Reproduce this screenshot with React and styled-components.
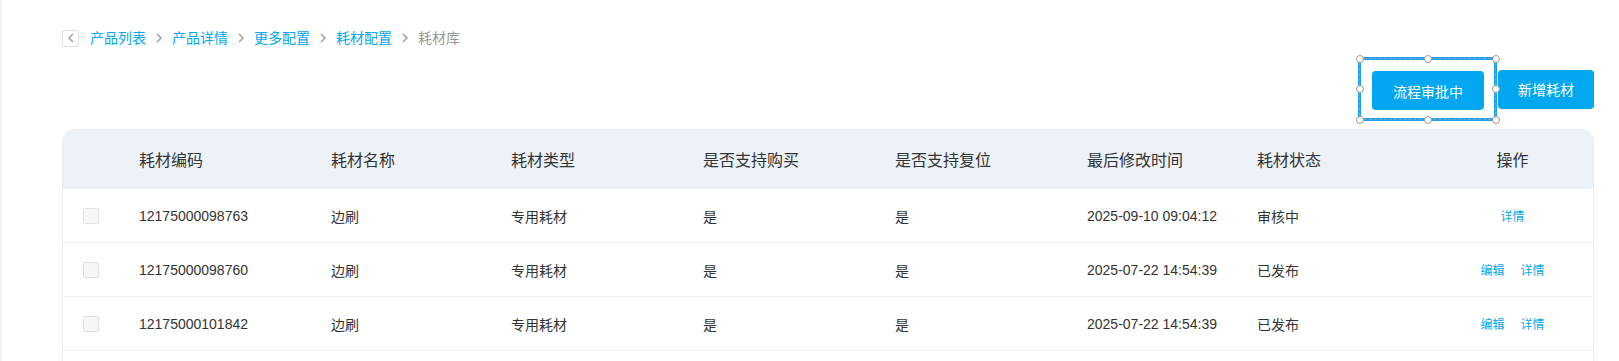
import React from "react";
import styled, { createGlobalStyle, css } from "styled-components";

const BLUE = "#02a7f0";

const GlobalStyle = createGlobalStyle`
  html, body {
    margin: 0;
    padding: 0;
    background: #fff;
    overflow: hidden;
  }
  body {
    font-family: "Liberation Sans", "Noto Sans CJK SC", sans-serif;
    color: #333;
  }
  * {
    box-sizing: border-box;
  }
`;

const rows = [
  { code: "12175000098763", name: "边刷", type: "专用耗材", buy: "是", reset: "是", time: "2025-09-10 09:04:12", status: "审核中", editable: false },
  { code: "12175000098760", name: "边刷", type: "专用耗材", buy: "是", reset: "是", time: "2025-07-22 14:54:39", status: "已发布", editable: true },
  { code: "12175000101842", name: "边刷", type: "专用耗材", buy: "是", reset: "是", time: "2025-07-22 14:54:39", status: "已发布", editable: true },
];

const crumbs = ["产品列表", "产品详情", "更多配置", "耗材配置"];

const handles = [
  [0, 0], [50, 0], [100, 0],
  [0, 50], [100, 50],
  [0, 100], [50, 100], [100, 100],
];

const ChevronRight = () => (
  <svg width="6" height="10" viewBox="0 0 6 10">
    <path d="M1 1l4 4-4 4" fill="none" stroke="#999" strokeWidth="1.4" />
  </svg>
);

const ChevronLeft = () => (
  <svg width="6" height="10" viewBox="0 0 6 10">
    <path d="M5 1L1 5l4 4" fill="none" stroke="#999" strokeWidth="1.4" />
  </svg>
);

const App = () => {
  return (
    <>
      <GlobalStyle />
      <Page>
        <Breadcrumb>
          <BackButton>
            <ChevronLeft />
          </BackButton>
          {crumbs.map((c) => (
            <React.Fragment key={c}>
              <Crumb>{c}</Crumb>
              <Sep>
                <ChevronRight />
              </Sep>
            </React.Fragment>
          ))}
          <Crumb $current>耗材库</Crumb>
        </Breadcrumb>

        <Toolbar>
          <Selection>
            <PrimaryButton>流程审批中</PrimaryButton>
            {handles.map(([x, y]) => (
              <Handle key={`${x}-${y}`} $x={x} $y={y} />
            ))}
          </Selection>
          <PrimaryButton $narrow>新增耗材</PrimaryButton>
        </Toolbar>

        <Table>
          <HeadRow>
            <Cell />
            <Cell>耗材编码</Cell>
            <Cell>耗材名称</Cell>
            <Cell>耗材类型</Cell>
            <Cell>是否支持购买</Cell>
            <Cell>是否支持复位</Cell>
            <Cell>最后修改时间</Cell>
            <Cell>耗材状态</Cell>
            <Cell $center>操作</Cell>
          </HeadRow>
          {rows.map((r) => (
            <Row key={r.code}>
              <Cell $check>
                <Checkbox />
              </Cell>
              <Cell>{r.code}</Cell>
              <Cell>{r.name}</Cell>
              <Cell>{r.type}</Cell>
              <Cell>{r.buy}</Cell>
              <Cell>{r.reset}</Cell>
              <Cell>{r.time}</Cell>
              <Cell>{r.status}</Cell>
              <Cell $center>
                <Actions>
                  {r.editable && <ActionLink>编辑</ActionLink>}
                  <ActionLink>详情</ActionLink>
                </Actions>
              </Cell>
            </Row>
          ))}
        </Table>
      </Page>
    </>
  );
};

export default App;

const Page = styled.div`
  height: 361px;
  overflow: hidden;
  border-left: 2px solid #eff1f4;
  padding: 29px 25px 0 60px;
`;

const Breadcrumb = styled.div`
  display: flex;
  align-items: center;
  height: 18px;
  font-size: 14px;
`;

const BackButton = styled.div`
  width: 17px;
  height: 17px;
  border: 1px solid #dcdfe6;
  border-radius: 2px;
  display: flex;
  justify-content: center;
  align-items: center;
  margin-right: 11px;
`;

const Crumb = styled.span`
  color: ${({ $current }) => ($current ? "#999" : BLUE)};
  line-height: 18px;
  white-space: nowrap;
`;

const Sep = styled.span`
  display: flex;
  align-items: center;
  margin: 0 10px;
`;

const Toolbar = styled.div`
  display: flex;
  justify-content: flex-end;
  align-items: center;
  margin-top: 10px;
`;

const Selection = styled.div`
  position: relative;
  border: 3px solid #1ba1ee;
  padding: 11px 10px 8px 11px;
  margin-right: 1px;

  &::before {
    content: "";
    position: absolute;
    inset: -2px;
    border: 1px dashed rgba(150, 165, 180, 0.85);
    pointer-events: none;
  }
`;

const Handle = styled.span`
  position: absolute;
  width: 8px;
  height: 8px;
  border-radius: 50%;
  background: #fff;
  border: 1.5px solid #9a9a9a;
  transform: translate(-50%, -50%);
  ${({ $x, $y }) => css`
    left: calc(${$x}% + ${($x - 50) * 0.03}px);
    top: calc(${$y}% + ${($y - 50) * 0.03}px);
  `}
`;

const PrimaryButton = styled.button`
  display: block;
  height: 39px;
  padding: 0 ${({ $narrow }) => ($narrow ? "20px" : "21px")};
  border: none;
  border-radius: 4px;
  background: ${BLUE};
  color: #fff;
  font-family: inherit;
  font-size: 14px;
  white-space: nowrap;
  cursor: pointer;
`;

const Table = styled.div`
  margin-top: 8px;
  min-height: 300px;
  border-left: 1px solid #ebeef5;
  border-right: 1px solid #ebeef5;
  border-radius: 12px 12px 0 0;
  overflow: hidden;
`;

const gridCols = "64px 192px 180px 192px 192px 192px 170px 187px 1fr";

const HeadRow = styled.div`
  display: grid;
  grid-template-columns: ${gridCols};
  height: 60px;
  background: #edf1f8;
  font-size: 16px;
  color: #333;
`;

const Row = styled.div`
  display: grid;
  grid-template-columns: ${gridCols};
  height: 54px;
  border-bottom: 1px solid #ebeef5;
  font-size: 14px;
  color: #333;
`;

const Cell = styled.div`
  display: flex;
  align-items: center;
  white-space: nowrap;
  padding-left: ${({ $center, $check }) => ($center ? "0" : $check ? "20px" : "12px")};
  justify-content: ${({ $center }) => ($center ? "center" : "flex-start")};
`;

const Checkbox = styled.span`
  width: 16px;
  height: 16px;
  border: 1px solid #dcdfe6;
  border-radius: 2px;
  background: #f5f7fa;
`;

const Actions = styled.div`
  display: flex;
  gap: 16px;
`;

const ActionLink = styled.a`
  font-size: 12px;
  color: ${BLUE};
  cursor: pointer;
`;
